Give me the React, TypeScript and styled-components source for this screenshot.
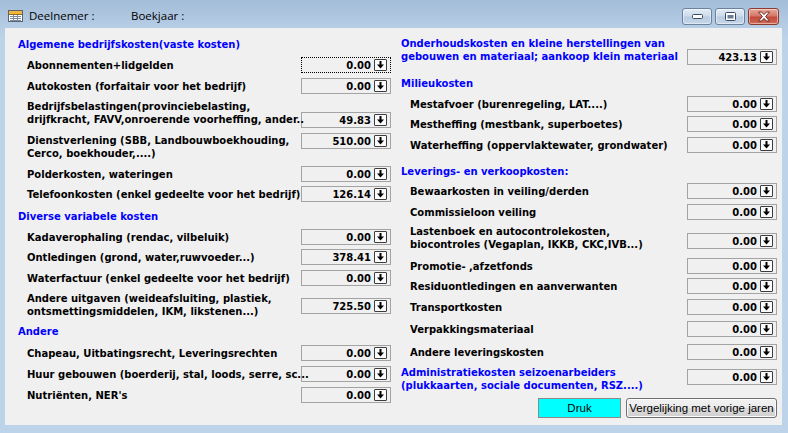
import React from 'react'
import styled, { createGlobalStyle } from 'styled-components'

const GlobalStyle = createGlobalStyle`
  html, body {
    margin: 0;
    padding: 0;
  }
  body {
    width: 788px;
    height: 433px;
    overflow: hidden;
    background: #bcd3ea;
  }
`

const Window = styled.div`
  width: 788px;
  height: 433px;
  display: flex;
  flex-direction: column;
  background: linear-gradient(180deg, #a3bcd7 0px, #b5cce5 26px, #bcd3ea 40px, #bcd3ea 100%);
`

const TitleBar = styled.div`
  height: 28px;
  flex: none;
  display: flex;
  align-items: flex-start;
  padding: 0 9px 0 8px;
  box-sizing: border-box;
`

const TitleIcon = styled.div`
  margin-top: 10px;
  margin-right: 6px;
  flex: none;
  display: flex;
`

const TitleText = styled.div<{ $width?: number }>`
  margin-top: 8px;
  width: ${p => (p.$width ? `${p.$width}px` : 'auto')};
  font-family: 'Open Sans', 'Noto Sans', sans-serif;
  font-size: 11.5px;
  line-height: 16px;
  color: #000;
`

const CaptionButtons = styled.div`
  margin-left: auto;
  margin-top: 8px;
  display: flex;
  gap: 3px;
`

const CaptionButton = styled.div<{ $close?: boolean }>`
  width: ${p => (p.$close ? 31 : 30)}px;
  height: 17px;
  box-sizing: border-box;
  border-radius: 3px;
  border: 1px solid ${p => (p.$close ? '#8c3b31' : '#6c819b')};
  background: ${p =>
    p.$close
      ? 'linear-gradient(180deg, #e9a899 0%, #d5786a 45%, #c24a3b 55%, #d06a55 100%)'
      : 'linear-gradient(180deg, #e3ecf6 0%, #cddbeb 45%, #b9cce2 55%, #c6d7ea 100%)'};
  box-shadow: inset 0 0 0 1px rgba(255, 255, 255, 0.45);
  display: flex;
  align-items: center;
  justify-content: center;
`

const Client = styled.div`
  flex: 1;
  margin: 0 6px 8px 5px;
  background: #f0f0f0;
  display: grid;
  grid-template-columns: 373px 376px;
  column-gap: 10px;
  padding-left: 13px;
  align-content: start;
  font-family: 'DejaVu Sans', Verdana, sans-serif;
  font-weight: bold;
  font-size: 10px;
  color: #000;
`

const Column = styled.div`
  display: flex;
  flex-direction: column;
`

const Header = styled.div<{ $mt: number }>`
  margin-top: ${p => p.$mt}px;
  line-height: 13px;
  color: #0000ff;
  white-space: nowrap;
`

const Row = styled.div<{ $mt: number; $multi?: boolean }>`
  margin-top: ${p => p.$mt}px;
  display: grid;
  grid-template-columns: 1fr 90px;
  align-items: ${p => (p.$multi ? 'start' : 'center')};
`

const Label = styled.div<{ $blue?: boolean; $pt?: number }>`
  position: relative;
  z-index: 1;
  min-width: 0;
  padding-left: ${p => (p.$blue ? 0 : 9)}px;
  padding-top: ${p => p.$pt ?? 0}px;
  line-height: 13px;
  white-space: nowrap;
  color: ${p => (p.$blue ? '#0000ff' : '#000')};
`

const Box = styled.div<{ $focus?: boolean; $top?: number }>`
  margin-top: ${p => p.$top ?? 0}px;
  height: 16px;
  box-sizing: border-box;
  border: 1px ${p => (p.$focus ? 'dotted #000' : 'solid #a3a3a3')};
  background: #f0f0f0;
  display: flex;
  align-items: center;
  justify-content: flex-end;
  padding-right: 3px;
`

const Value = styled.span`
  line-height: 13px;
  margin-right: 3px;
`

const DropButton = styled.div`
  width: 13px;
  height: 12px;
  box-sizing: border-box;
  border: 1px solid #3c3c3c;
  border-radius: 1px;
  background: #fbfbfb;
  display: flex;
  align-items: center;
  justify-content: center;
`

const ButtonBar = styled.div`
  margin-top: 6px;
  display: flex;
  justify-content: flex-end;
  gap: 5px;
`

const PushButton = styled.button<{ $cyan?: boolean; $width: number }>`
  width: ${p => p.$width}px;
  height: 20px;
  margin: 0;
  padding: 0;
  box-sizing: border-box;
  font-family: 'Liberation Sans', Arial, sans-serif;
  font-size: 11.5px;
  color: #000;
  border: 1px solid ${p => (p.$cyan ? '#8a8a8a' : '#707070')};
  border-radius: ${p => (p.$cyan ? 0 : 3)}px;
  background: ${p =>
    p.$cyan ? '#00ffff' : 'linear-gradient(180deg, #f2f2f2 0%, #ebebeb 50%, #dddddd 51%, #cfcfcf 100%)'};
  box-shadow: ${p => (p.$cyan ? 'none' : 'inset 0 0 0 1px #fcfcfc')};
`

type Item =
  | { kind: 'h'; text: string; mt: number }
  | {
      kind: 'r'
      label: string[]
      value: string
      mt: number
      boxTop?: number
      labelTop?: number
      focus?: boolean
      blue?: boolean
    }

const leftItems: Item[] = [
  { kind: 'h', text: 'Algemene bedrijfskosten(vaste kosten)', mt: 10 },
  { kind: 'r', label: ['Abonnementen+lidgelden'], value: '0.00', mt: 6, focus: true },
  { kind: 'r', label: ['Autokosten (forfaitair voor het bedrijf)'], value: '0.00', mt: 5 },
  {
    kind: 'r',
    label: ['Bedrijfsbelastingen(provinciebelasting,', 'drijfkracht, FAVV,onroerende voorheffing, ander..'],
    value: '49.83',
    mt: 6,
    boxTop: 12,
  },
  {
    kind: 'r',
    label: ['Dienstverlening (SBB, Landbouwboekhouding,', 'Cerco, boekhouder,....)'],
    value: '510.00',
    mt: 5,
    labelTop: 1,
  },
  { kind: 'r', label: ['Polderkosten, wateringen'], value: '0.00', mt: 6 },
  { kind: 'r', label: ['Telefoonkosten (enkel gedeelte voor het bedrijf)'], value: '126.14', mt: 4 },
  { kind: 'h', text: 'Diverse variabele kosten', mt: 8 },
  { kind: 'r', label: ['Kadaverophaling (rendac, vilbeluik)'], value: '0.00', mt: 6 },
  { kind: 'r', label: ['Ontledingen (grond, water,ruwvoeder...)'], value: '378.41', mt: 4 },
  { kind: 'r', label: ['Waterfactuur (enkel gedeelte voor het bedrijf)'], value: '0.00', mt: 5 },
  {
    kind: 'r',
    label: ['Andere uitgaven (weideafsluiting, plastiek,', 'ontsmettingsmiddelen, IKM, likstenen...)'],
    value: '725.50',
    mt: 6,
    boxTop: 6,
  },
  { kind: 'h', text: 'Andere', mt: 7 },
  { kind: 'r', label: ['Chapeau, Uitbatingsrecht, Leveringsrechten'], value: '0.00', mt: 7 },
  { kind: 'r', label: ['Huur gebouwen (boerderij, stal, loods, serre, sc...'], value: '0.00', mt: 5 },
  { kind: 'r', label: ["Nutriënten, NER's"], value: '0.00', mt: 5 },
]

const rightItems: Item[] = [
  {
    kind: 'r',
    label: ['Onderhoudskosten en kleine herstellingen van', 'gebouwen en materiaal; aankoop klein materiaal'],
    value: '423.13',
    mt: 9,
    boxTop: 12,
    blue: true,
  },
  { kind: 'h', text: 'Milieukosten', mt: 12 },
  { kind: 'r', label: ['Mestafvoer (burenregeling, LAT....)'], value: '0.00', mt: 6 },
  { kind: 'r', label: ['Mestheffing (mestbank, superboetes)'], value: '0.00', mt: 4 },
  { kind: 'r', label: ['Waterheffing (oppervlaktewater, grondwater)'], value: '0.00', mt: 5 },
  { kind: 'h', text: 'Leverings- en verkoopkosten:', mt: 12 },
  { kind: 'r', label: ['Bewaarkosten in veiling/derden'], value: '0.00', mt: 5 },
  { kind: 'r', label: ['Commissieloon veiling'], value: '0.00', mt: 5 },
  {
    kind: 'r',
    label: ['Lastenboek en autocontrolekosten,', 'biocontroles (Vegaplan, IKKB, CKC,IVB...)'],
    value: '0.00',
    mt: 5,
    boxTop: 8,
  },
  { kind: 'r', label: ['Promotie- ,afzetfonds'], value: '0.00', mt: 7 },
  { kind: 'r', label: ['Residuontledingen en aanverwanten'], value: '0.00', mt: 4 },
  { kind: 'r', label: ['Transportkosten'], value: '0.00', mt: 5 },
  { kind: 'r', label: ['Verpakkingsmateriaal'], value: '0.00', mt: 6 },
  { kind: 'r', label: ['Andere leveringskosten'], value: '0.00', mt: 7 },
  {
    kind: 'r',
    label: ['Administratiekosten seizoenarbeiders', '(plukkaarten, sociale documenten, RSZ....)'],
    value: '0.00',
    mt: 6,
    boxTop: 3,
    blue: true,
  },
]

function DownArrow() {
  return (
    <svg width="9" height="8" viewBox="0 0 9 8">
      <rect x="3.5" y="0" width="2" height="4" fill="#000" />
      <path d="M1 3.5 H8 L4.5 7.5 Z" fill="#000" />
    </svg>
  )
}

function Field({ item }: { item: Extract<Item, { kind: 'r' }> }) {
  const multi = item.label.length > 1
  return (
    <Row $mt={item.mt} $multi={multi}>
      <Label $blue={item.blue} $pt={item.labelTop}>
        {item.label.map(line => (
          <div key={line}>{line}</div>
        ))}
      </Label>
      <Box $focus={item.focus} $top={item.boxTop}>
        <Value>{item.value}</Value>
        <DropButton>
          <DownArrow />
        </DropButton>
      </Box>
    </Row>
  )
}

function renderItems(items: Item[]) {
  return items.map((item, i) =>
    item.kind === 'h' ? (
      <Header key={i} $mt={item.mt}>
        {item.text}
      </Header>
    ) : (
      <Field key={i} item={item} />
    ),
  )
}

function FormIcon() {
  return (
    <svg width="15" height="12" viewBox="0 0 15 12">
      <rect x="0.5" y="0.5" width="14" height="11" fill="#fff" stroke="#5a6470" />
      <rect x="1" y="1" width="13" height="3" fill="#f2b53a" />
      <line x1="1" y1="4.5" x2="14" y2="4.5" stroke="#8b6a2a" />
      <g stroke="#7d8ea3">
        <line x1="2" y1="6.5" x2="13" y2="6.5" />
        <line x1="2" y1="8.5" x2="13" y2="8.5" />
        <line x1="2" y1="10.5" x2="13" y2="10.5" />
        <line x1="5.5" y1="5" x2="5.5" y2="11" />
        <line x1="9.5" y1="5" x2="9.5" y2="11" />
      </g>
    </svg>
  )
}

export default function App() {
  return (
    <>
      <GlobalStyle />
      <Window>
        <TitleBar>
          <TitleIcon>
            <FormIcon />
          </TitleIcon>
          <TitleText $width={102}>Deelnemer :</TitleText>
          <TitleText>Boekjaar :</TitleText>
          <CaptionButtons>
            <CaptionButton>
              <svg width="11" height="5" viewBox="0 0 11 5">
                <rect x="0.5" y="0.5" width="10" height="4" rx="1" fill="#fff" stroke="#3b4a5e" />
              </svg>
            </CaptionButton>
            <CaptionButton>
              <svg width="11" height="9" viewBox="0 0 11 9">
                <rect x="0.5" y="0.5" width="10" height="8" rx="1" fill="#fff" stroke="#3b4a5e" />
                <rect x="2.5" y="3" width="6" height="3.5" fill="#6a7c94" />
              </svg>
            </CaptionButton>
            <CaptionButton $close>
              <svg width="14" height="11" viewBox="0 0 14 11">
                <path
                  d="M1.5 1 H4.5 L7 3.6 L9.5 1 H12.5 L8.6 5.5 L12.5 10 H9.5 L7 7.4 L4.5 10 H1.5 L5.4 5.5 Z"
                  fill="#fff"
                  stroke="#5e2119"
                  strokeWidth="0.9"
                  strokeLinejoin="round"
                />
              </svg>
            </CaptionButton>
          </CaptionButtons>
        </TitleBar>
        <Client>
          <Column>{renderItems(leftItems)}</Column>
          <Column>
            {renderItems(rightItems)}
            <ButtonBar>
              <PushButton $cyan $width={83}>
                Druk
              </PushButton>
              <PushButton $width={151}>Vergelijking met vorige jaren</PushButton>
            </ButtonBar>
          </Column>
        </Client>
      </Window>
    </>
  )
}
